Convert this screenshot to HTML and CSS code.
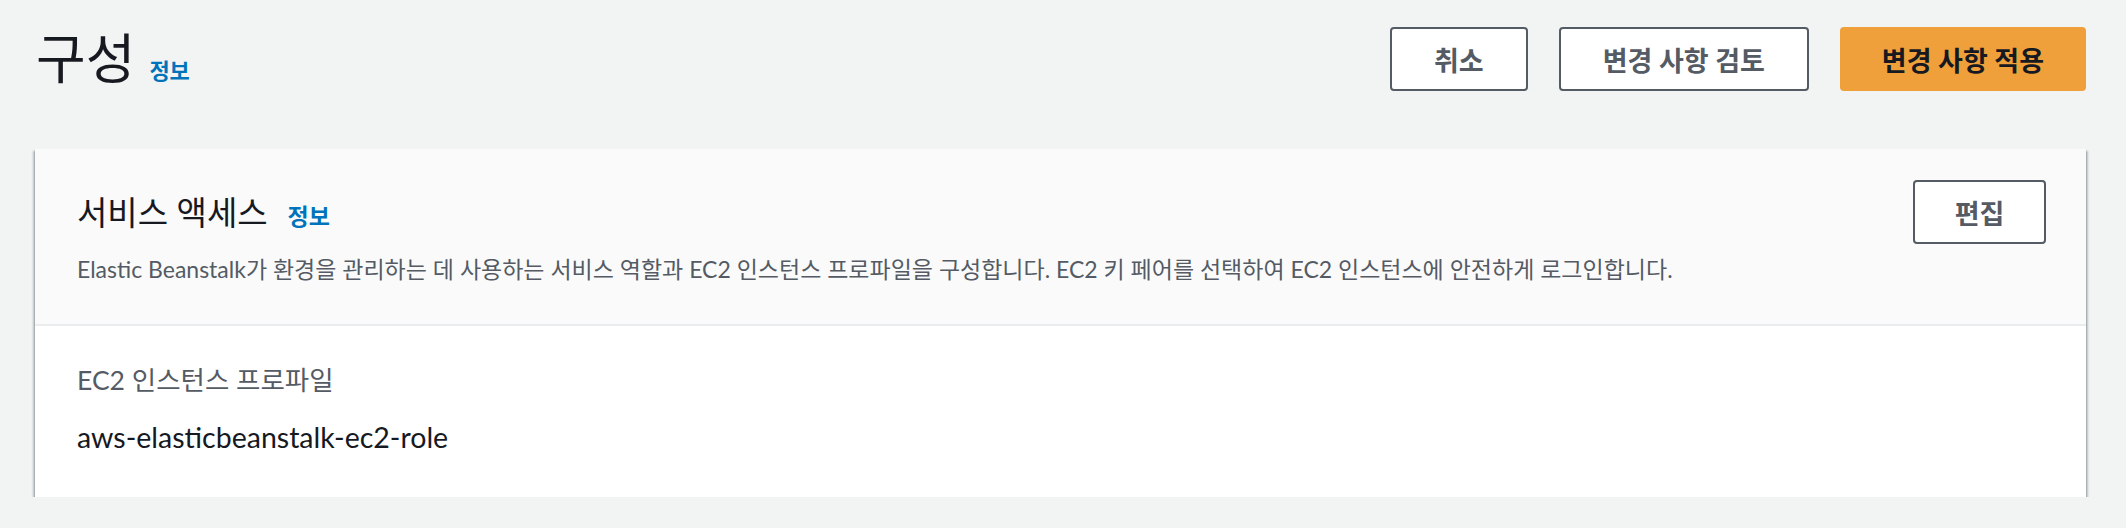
FILE: index.html
```html
<!DOCTYPE html>
<html lang="ko">
<head>
<meta charset="utf-8">
<title>구성</title>
<link rel="stylesheet" href="styles.css">
</head>
<body>
<div class="page">
  <header class="page-header">
    <div class="page-title">
      <h1>구성</h1>
      <a class="info-link info-link--lg" href="#">정보</a>
    </div>
    <div class="actions">
      <button class="btn">취소</button>
      <button class="btn">변경 사항 검토</button>
      <button class="btn btn--primary">변경 사항 적용</button>
    </div>
  </header>

  <section class="card">
    <div class="card-header">
      <div class="card-header-row">
        <div class="card-title">
          <h2>서비스 액세스</h2>
          <a class="info-link" href="#">정보</a>
        </div>
        <button class="btn btn--edit">편집</button>
      </div>
      <p class="card-desc">Elastic Beanstalk가 환경을 관리하는 데 사용하는 서비스 역할과 EC2 인스턴스 프로파일을 구성합니다. EC2 키 페어를 선택하여 EC2 인스턴스에 안전하게 로그인합니다.</p>
    </div>
    <div class="card-body">
      <div class="field-label">EC2 인스턴스 프로파일</div>
      <div class="field-value">aws-elasticbeanstalk-ec2-role</div>
    </div>
  </section>
</div>
</body>
</html>
```

FILE: styles.css
```css
* { box-sizing: border-box; }

html, body {
  margin: 0;
  padding: 0;
  background: #f2f3f3;
}

body {
  font-family: Lato, "Noto Sans CJK KR", sans-serif;
  color: #16191f;
}

.page {
  padding: 27px 40px 0 35px;
}

.page-header {
  display: flex;
  justify-content: space-between;
  align-items: flex-start;
  height: 122px;
}

.page-title {
  display: flex;
  align-items: baseline;
  gap: 14px;
  padding-left: 1px;
}

.page-title h1 {
  margin: 0;
  font-size: 54px;
  font-weight: 400;
  line-height: 64px;
  color: #16191f;
}

.info-link {
  font-size: 23px;
  font-weight: 700;
  color: #0073bb;
  text-decoration: none;
}

.info-link--lg {
  font-size: 22px;
}

.actions {
  display: flex;
  gap: 31px;
}

.btn {
  height: 64px;
  min-width: 133px;
  padding: 0 42px;
  border: 2px solid #545b64;
  border-radius: 4px;
  background: #ffffff;
  color: #545b64;
  font-family: Lato, "Noto Sans CJK KR", sans-serif;
  font-size: 27px;
  font-weight: 700;
  cursor: pointer;
}

.btn--primary {
  padding: 0 40px;
  border-color: #f0a03b;
  background: #f0a03b;
  color: #16191f;
}

.btn--edit {
  padding: 0 36px;
}

.card {
  background: #ffffff;
  box-shadow: 0 2px 2px 0 rgba(0, 28, 36, 0.45), 2px 2px 2px 0 rgba(0, 28, 36, 0.2), -2px 2px 2px 0 rgba(0, 28, 36, 0.2);
}

.card-header {
  background: #fafafa;
  border-bottom: 2px solid #eaeded;
  padding: 31px 40px 40px 42px;
}

.card-header-row {
  display: flex;
  justify-content: space-between;
  align-items: center;
}

.card-title {
  display: flex;
  align-items: baseline;
  gap: 20px;
}

.card-title h2 {
  margin: 0;
  font-size: 33px;
  font-weight: 400;
  line-height: 40px;
  color: #16191f;
}

.card-desc {
  margin: 10px 0 0;
  font-size: 23px;
  line-height: 30px;
  color: #545b64;
}

.card-body {
  padding: 37px 42px 42px;
}

.field-label {
  font-size: 26.5px;
  line-height: 34px;
  color: #545b64;
}

.field-value {
  margin-top: 22px;
  font-size: 28.5px;
  line-height: 36px;
  color: #16191f;
}
```
